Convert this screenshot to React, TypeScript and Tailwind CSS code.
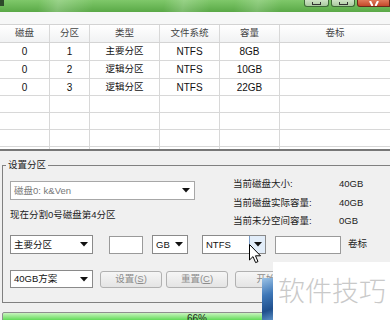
import React from "react";

const gridCols = "grid grid-cols-[50px_40px_70px_60px_60px_1fr]";

const headers = ["磁盘", "分区", "类型", "文件系统", "容量", "卷标"];

const rows = [
  { h: "h-[18px]", cells: ["0", "1", "主要分区", "NTFS", "8GB", ""] },
  { h: "h-[18px]", cells: ["0", "2", "逻辑分区", "NTFS", "10GB", ""] },
  { h: "h-[17px]", cells: ["0", "3", "逻辑分区", "NTFS", "22GB", ""] },
  { h: "h-[17px]", cells: ["", "", "", "", "", ""] },
  { h: "h-[17px]", cells: ["", "", "", "", "", ""] },
  { h: "h-[17px]", cells: ["", "", "", "", "", ""] },
];

function Arrow() {
  return (
    <svg width="8" height="5" viewBox="0 0 8 5">
      <polygon points="0,0 8,0 4,4.5" fill="#111" />
    </svg>
  );
}

function Combo({
  w,
  text,
  disabled,
  hover,
  h = "h-[19px]",
}: {
  w: string;
  text: string;
  disabled?: boolean;
  hover?: boolean;
  h?: string;
}) {
  return (
    <div
      className={`${w} ${h} flex shrink-0 items-center border bg-white ${
        disabled ? "border-[#a7a7a7] text-[#777]" : "border-[#8a8a8a] text-[#111]"
      }`}
    >
      <span className="flex-1 truncate pl-[3px] text-[9.5px] leading-none">{text}</span>
      <div
        className={`flex h-full w-[16px] items-center justify-center ${
          hover ? "border-l border-[#7a9cc6] bg-[#e2edf9]" : ""
        }`}
      >
        <Arrow />
      </div>
    </div>
  );
}

function TextBox({ w }: { w: string }) {
  return <div className={`${w} h-[18px] shrink-0 border border-[#9a9a9a] bg-white`} />;
}

function Btn({ label, hot, ml }: { label: string; hot: string; ml: string }) {
  return (
    <div
      className={`${ml} flex h-[17px] w-[62px] shrink-0 items-center justify-center rounded-[3px] border border-[#b1b1b1] bg-[linear-gradient(to_bottom,#f6f6f6,#e4e4e4)] text-[9.5px] text-[#8c8c8c]`}
    >
      {label}
      {hot && (
        <>
          (<span className="underline">{hot}</span>)
        </>
      )}
    </div>
  );
}

function Cursor() {
  return (
    <svg width="13" height="20" viewBox="0 0 13 20">
      <path
        d="M0.5 0.5 L0.5 16 L4 12.6 L6.6 18.6 L9 17.6 L6.5 11.8 L11.5 11.8 Z"
        fill="#fff"
        stroke="#000"
        strokeWidth="1"
        strokeLinejoin="round"
      />
    </svg>
  );
}

export default function App() {
  return (
    <div className="h-[320px] w-[390px] overflow-hidden bg-white font-['Liberation_Sans','Noto_Sans_CJK_SC',sans-serif] text-[#111]">
      {/* title bar */}
      <div className="flex h-[12px] items-start justify-between bg-[linear-gradient(100deg,transparent_10%,rgba(255,255,255,0.22)_15%,transparent_24%,transparent_42%,rgba(255,255,255,0.2)_47%,transparent_54%,transparent_60%,rgba(255,255,255,0.18)_66%,transparent_72%),linear-gradient(to_bottom,#7fc86a,#5aa947)]">
        <div className="h-[6px] w-[4px] bg-[#2d4a2a]" />
        <div className="flex gap-[2px]">
          <div className="flex h-[7px] w-[25px] items-end justify-center rounded-b-[3px] border border-t-0 border-[#3f6a38] bg-[linear-gradient(to_bottom,#cfe3c6,#a9c99e)]">
            <div className="mb-[1px] h-[3px] w-[9px] border border-t-0 border-[#333]" />
          </div>
          <div className="flex h-[7px] w-[24px] items-end justify-center rounded-b-[3px] border border-t-0 border-[#3f6a38] bg-[linear-gradient(to_bottom,#cfe3c6,#a9c99e)]">
            <div className="mb-[1px] h-[3px] w-[9px] border border-t-0 border-[#333]" />
          </div>
          <div className="flex h-[7px] w-[33px] items-end justify-center rounded-bl-[3px] border border-t-0 border-[#6b2a1a] bg-[linear-gradient(to_bottom,#e07a5a,#c4482a)]">
            <svg width="10" height="5" viewBox="0 0 10 5">
              <path d="M1 0 L3.5 5 M9 0 L6.5 5" stroke="#fff" strokeWidth="2" />
            </svg>
          </div>
        </div>
      </div>

      {/* toolbar strip */}
      <div className="h-[13px] border-b border-[#d3d3d3] bg-[#f6f7f7]" />

      {/* table */}
      <div className="border-b-2 border-[#777] bg-white">
        <div
          className={`${gridCols} h-[18px] border-b border-[#d4d4d4] bg-[linear-gradient(to_bottom,#ffffff,#f1f2f3)] text-[9.5px] text-[#444]`}
        >
          {headers.map((t, i) => (
            <div
              key={t}
              className={`flex items-center justify-center ${
                i < 5 ? "border-r border-[#d8d8d8]" : ""
              }`}
            >
              {t}
            </div>
          ))}
        </div>
        {rows.map((r, ri) => (
          <div
            key={ri}
            className={`${gridCols} ${r.h} border-b border-[#d8d8d8] text-[10px]`}
          >
            {r.cells.map((c, i) => (
              <div
                key={i}
                className={`flex items-center justify-center ${
                  i < 5 ? "border-r border-[#d8d8d8]" : ""
                } ${i === 2 ? "text-[9.5px]" : ""}`}
              >
                {c}
              </div>
            ))}
          </div>
        ))}
        <div className={`${gridCols} h-[2px]`}>
          {[0, 1, 2, 3, 4, 5].map((i) => (
            <div key={i} className={i < 5 ? "border-r border-[#d8d8d8]" : ""} />
          ))}
        </div>
      </div>

      {/* settings panel */}
      <div className="relative h-[169px] bg-[#f0f0f0] pt-[8px]">
        <fieldset className="ml-[2px] h-[144px] w-[400px] border border-[#808080]">
          <legend className="ml-[3px] h-[12px] px-[2px] text-[9.5px] leading-[12px] text-[#222]">
            设置分区
          </legend>
          <div className="pl-[7px]">
            <div className="mt-[4px] flex h-[60px] items-start">
              <div className="flex w-[185px] flex-col">
                <div className="mt-[6px]">
                  <Combo w="w-[185px]" text="磁盘0: k&Ven" disabled />
                </div>
                <div className="mt-[8px] text-[9.5px] leading-[13px] text-[#222]">
                  现在分割0号磁盘第4分区
                </div>
              </div>
              <div className="ml-[38px] grid grid-cols-[106px_auto] text-[9.5px] leading-[18.5px] text-[#222]">
                <span>当前磁盘大小:</span>
                <span>40GB</span>
                <span>当前磁盘实际容量:</span>
                <span>40GB</span>
                <span>当前未分空间容量:</span>
                <span>0GB</span>
              </div>
            </div>

            <div className="flex h-[19px] items-center">
              <Combo w="w-[83px]" text="主要分区" />
              <div className="ml-[16px]">
                <TextBox w="w-[34px]" />
              </div>
              <div className="ml-[9px]">
                <Combo w="w-[36px]" text="GB" />
              </div>
              <div className="ml-[14px]">
                <Combo w="w-[64px]" text="NTFS" hover />
              </div>
              <div className="ml-[9px]">
                <TextBox w="w-[66px]" />
              </div>
              <span className="ml-[7px] text-[9.5px] text-[#222]">卷标</span>
            </div>

            <div className="mt-[16px] flex h-[18px] items-end">
              <Combo w="w-[83px]" text="40GB方案" h="h-[18px]" />
              <Btn label="设置" hot="S" ml="ml-[7px]" />
              <Btn label="重置" hot="C" ml="ml-[4px]" />
              <Btn label="开始" hot="" ml="ml-[7px]" />
            </div>
          </div>
        </fieldset>

        {/* progress bar */}
        <div className="ml-[2px] mt-[9px] flex h-[18px] w-[390px] items-start justify-center rounded-[2px] border border-[#8f8f8f] bg-[linear-gradient(to_bottom,#c9f5bf,#5fda55_45%,#31c22c)] text-[10px] leading-[10px] text-[#222]">
          <span className="mt-[1px]">66%</span>
        </div>

        {/* overlapping window edge */}
        <div className="absolute left-[262px] top-[127px] bottom-0 w-[11px] bg-[linear-gradient(160deg,#9cc3e6,#3f78b8_40%,#1f4f8d_75%,#5a8fc4)]" />

        {/* watermark */}
        <div className="absolute left-[273px] top-[111px] right-0 bottom-0 bg-white pl-[5px] pt-[14px] font-['Noto_Sans_CJK_SC',sans-serif] text-[27px] font-light leading-[27px] text-[#c9c9c9]">
          软件技巧
        </div>

        {/* mouse pointer */}
        <div className="absolute left-[249px] top-[93px]">
          <Cursor />
        </div>
      </div>
    </div>
  );
}
